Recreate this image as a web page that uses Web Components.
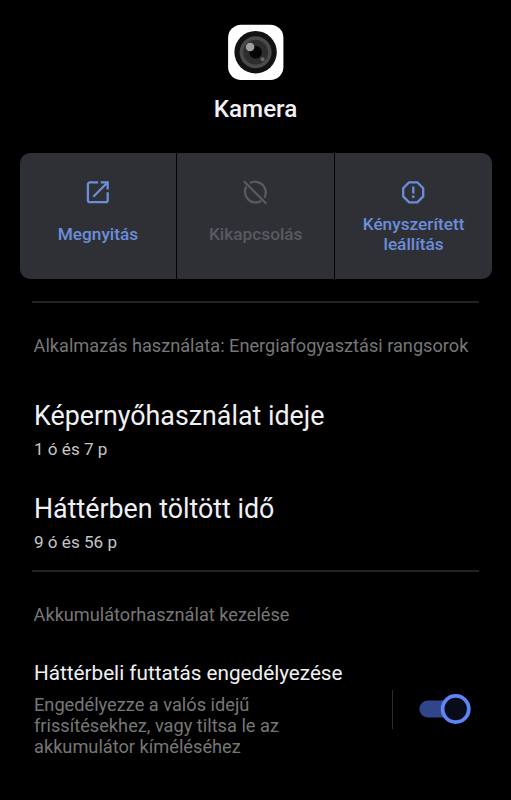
<!DOCTYPE html>
<html lang="hu">
<head>
<meta charset="utf-8">
<title>Kamera</title>
<style>
html, body { margin: 0; background: #000; }
body { font-family: Roboto, "Noto Sans", sans-serif; color: #f1f0f4; }
</style>
</head>
<body>
<app-info-page></app-info-page>
<script>
const define = (name, html) => {
  const template = document.createElement('template');
  template.innerHTML = html;
  customElements.define(name, class extends HTMLElement {
    constructor() {
      super();
      this.attachShadow({ mode: 'open' }).append(template.content.cloneNode(true));
    }
  });
};

define('app-header', `
<style>
:host { display: flex; flex-direction: column; align-items: center; padding-top: 24px; }
svg { display: block; width: 56px; height: 57px; }
.name { margin-top: 13px; font-size: 24.2px; line-height: 30px; font-weight: 500; }
</style>
<svg viewBox="0 0 56 57">
  <rect x=".1" y=".7" width="55.3" height="55.3" rx="13" fill="#fff"/>
  <circle cx="27.6" cy="28.2" r="21.2" fill="#121212"/>
  <circle cx="27.6" cy="28.2" r="16" fill="#4a4a4b"/>
  <circle cx="27.6" cy="28.2" r="12.4" fill="#2d2d2f"/>
  <circle cx="27.6" cy="28.2" r="6.3" fill="#050505"/>
  <circle cx="22.1" cy="23" r="4.3" fill="#a0a0a0"/>
  <circle cx="34.6" cy="35.2" r="2" fill="#686868"/>
</svg>
<div class="name"><slot></slot></div>`);

define('action-bar', `
<style>
:host { display: grid; grid-template-columns: repeat(3, 1fr); column-gap: 1px; height: 126px; margin: 29px 19px 0 19.5px; border-radius: 10px; overflow: hidden; }
</style>
<slot></slot>`);

define('action-button', `
<style>
:host { display: flex; flex-direction: column; align-items: center; padding-top: 24px; background: #2f3036; color: #6b8edb; font-size: 17.25px; line-height: 20px; font-weight: 500; text-align: center; }
:host([disabled]) { color: #595a60; }
.label { display: flex; align-items: center; justify-content: center; height: 40px; margin-top: 7px; }
</style>
<slot name="icon"></slot>
<div class="label"><span><slot></slot></span></div>`);

define('action-icon', `
<style>
:host { display: block; height: 30px; }
svg { display: block; width: 30px; height: 30px; }
g { display: none; fill: none; stroke: currentColor; stroke-width: 2.3; }
:host([name=open]) .open, :host([name=disable]) .disable, :host([name=stop]) .stop { display: inline; }
</style>
<svg viewBox="0 0 30 30">
  <g class="open">
    <path d="M15.1 5.4H6.9a2 2 0 0 0-2 2v15.8a2 2 0 0 0 2 2h15.8a2 2 0 0 0 2-2v-8M17.7 5.4H24.7v7.2M24.3 5.8 10.3 19.8"/>
  </g>
  <g class="disable">
    <path d="M2.9 4.2 25.4 26.7M8.8 6.1A10.7 10.7 0 0 1 23.4 20.7M20.1 24A10.7 10.7 0 0 1 5.4 9.4"/>
  </g>
  <g class="stop">
    <path d="M10.1 5.3h8.2l5.9 5.9v8.2L18.3 25.3h-8.2L4.2 19.4v-8.2z"/>
    <path d="M14.3 9.4v7.2M14.3 18.6v2.5"/>
  </g>
</svg>`);

define('rule-line', `
<style>:host { display: block; height: 2px; margin: 0 32px; background: #222; }</style>`);

define('section-title', `
<style>:host { display: block; font-size: 18.17px; line-height: 24px; color: #777; padding-left: 33.6px; white-space: nowrap; }</style>
<slot></slot>`);

define('usage-item', `
<style>
:host { display: block; padding-left: 34px; height: 93px; box-sizing: border-box; }
.title { font-size: 26.8px; line-height: 34px; }
.value { font-size: 17.1px; line-height: 22px; margin-top: 5px; color: #c5c5ca; }
</style>
<div class="title"><slot></slot></div>
<div class="value"><slot name="value"></slot></div>`);

define('toggle-switch', `
<style>:host { display: block; } svg { display: block; width: 54px; height: 32px; }</style>
<svg viewBox="0 0 54 32">
  <rect x="1.3" y="7.5" width="40" height="17" rx="8.5" fill="#30458a"/>
  <circle cx="37.7" cy="16" r="13.1" fill="#090c18" stroke="#5f84f5" stroke-width="3.8"/>
</svg>`);

define('switch-row', `
<style>
:host { display: flex; padding-left: 34px; }
.text { width: 358px; }
.title { font-size: 20.7px; line-height: 26px; white-space: nowrap; }
.detail { width: 270px; margin-top: 7.6px; font-size: 18.22px; line-height: 21.4px; color: #777; }
.side { display: flex; align-items: center; height: 39px; margin-top: 30px; border-left: 1px solid #2d2d2d; padding-left: 25px; }
toggle-switch { margin-bottom: 2px; }
</style>
<div class="text">
  <div class="title"><slot></slot></div>
  <div class="detail"><slot name="detail"></slot></div>
</div>
<div class="side"><toggle-switch></toggle-switch></div>`);

define('app-info-page', `
<style>
:host { display: flex; flex-direction: column; width: 511px; height: 800px; overflow: hidden; background: #000; }
.first-rule { margin-top: 22px; }
.usage-title { margin-top: 31px; }
.usage { padding-top: 41px; height: 171px; }
.battery-title { margin-top: 31px; }
switch-row { margin-top: 33px; }
</style>
<app-header>Kamera</app-header>
<action-bar>
  <action-button><action-icon slot="icon" name="open"></action-icon>Megnyitás</action-button>
  <action-button disabled><action-icon slot="icon" name="disable"></action-icon>Kikapcsolás</action-button>
  <action-button><action-icon slot="icon" name="stop"></action-icon>Kényszerített<br>leállítás</action-button>
</action-bar>
<rule-line class="first-rule"></rule-line>
<section-title class="usage-title">Alkalmazás használata: Energiafogyasztási rangsorok</section-title>
<div class="usage">
  <usage-item>Képernyőhasználat ideje<span slot="value">1 ó és 7 p</span></usage-item>
  <usage-item>Háttérben töltött idő<span slot="value">9 ó és 56 p</span></usage-item>
</div>
<rule-line></rule-line>
<section-title class="battery-title">Akkumulátorhasználat kezelése</section-title>
<switch-row>Háttérbeli futtatás engedélyezése<span slot="detail">Engedélyezze a valós idejű<br>frissítésekhez, vagy tiltsa le az<br>akkumulátor kíméléséhez</span></switch-row>`);
</script>
</body>
</html>
